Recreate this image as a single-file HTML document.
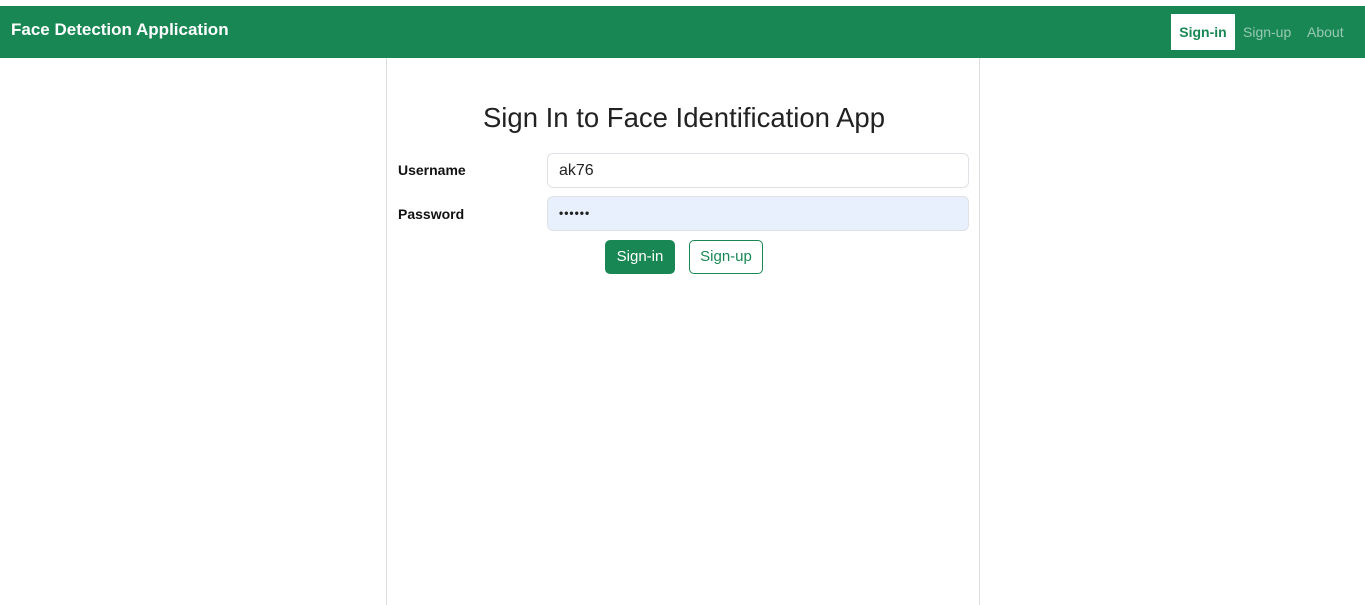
<!DOCTYPE html>
<html><head><meta charset="utf-8"><style>
*{box-sizing:border-box;margin:0;padding:0}
body{width:1365px;height:605px;background:#fff;font-family:"Comic Sans MS","Liberation Sans",sans-serif;overflow:hidden;position:relative}
.nav{position:absolute;top:6px;left:0;width:1365px;height:52px;background:#198754}
.brand{position:absolute;left:11px;top:14px;color:#fff;font-size:17px;font-weight:bold;white-space:nowrap}
.nl{position:absolute;top:8px;height:36px;line-height:36px;font-size:14px;color:rgba(255,255,255,.55);padding:0 6px;white-space:nowrap}
.act{background:#fff;color:#198754;font-weight:bold;left:1171px;width:64px;text-align:center;padding:0}
.col{position:absolute;left:386px;top:58px;width:594px;height:547px;border-left:1px solid #ddd;border-right:1px solid #ddd}
h1{position:absolute;top:44px;left:0;width:594px;text-align:center;font-weight:normal;font-size:27.5px;color:#222}
.lab{position:absolute;left:11px;font-size:14px;font-weight:bold;color:#111}
.inp{position:absolute;left:160px;width:422px;height:35px;border:1px solid #dee2e6;border-radius:6px;padding-left:11px;line-height:33px;font-size:16px;color:#222}
.btn{position:absolute;top:182px;height:34px;line-height:32px;border-radius:5px;font-size:15px;text-align:center;white-space:nowrap}
</style></head><body>
<div class="nav">
<div class="brand">Face Detection Application</div>
<div class="nl act">Sign-in</div>
<div class="nl" style="left:1237px">Sign-up</div>
<div class="nl" style="left:1301px">About</div>
</div>
<div class="col">
<h1>Sign In to Face Identification App</h1>
<div class="lab" style="top:104px">Username</div>
<div class="inp" style="top:95px">ak76</div>
<div class="lab" style="top:148px">Password</div>
<div class="inp" style="top:138px;background:#e8f0fe;font-size:12px;font-weight:bold;letter-spacing:1px">••••••</div>
<div class="btn" style="left:218px;width:70px;background:#198754;color:#fff;border:1px solid #198754">Sign-in</div>
<div class="btn" style="left:302px;width:74px;border:1px solid #198754;color:#198754">Sign-up</div>
</div>
</body></html>
